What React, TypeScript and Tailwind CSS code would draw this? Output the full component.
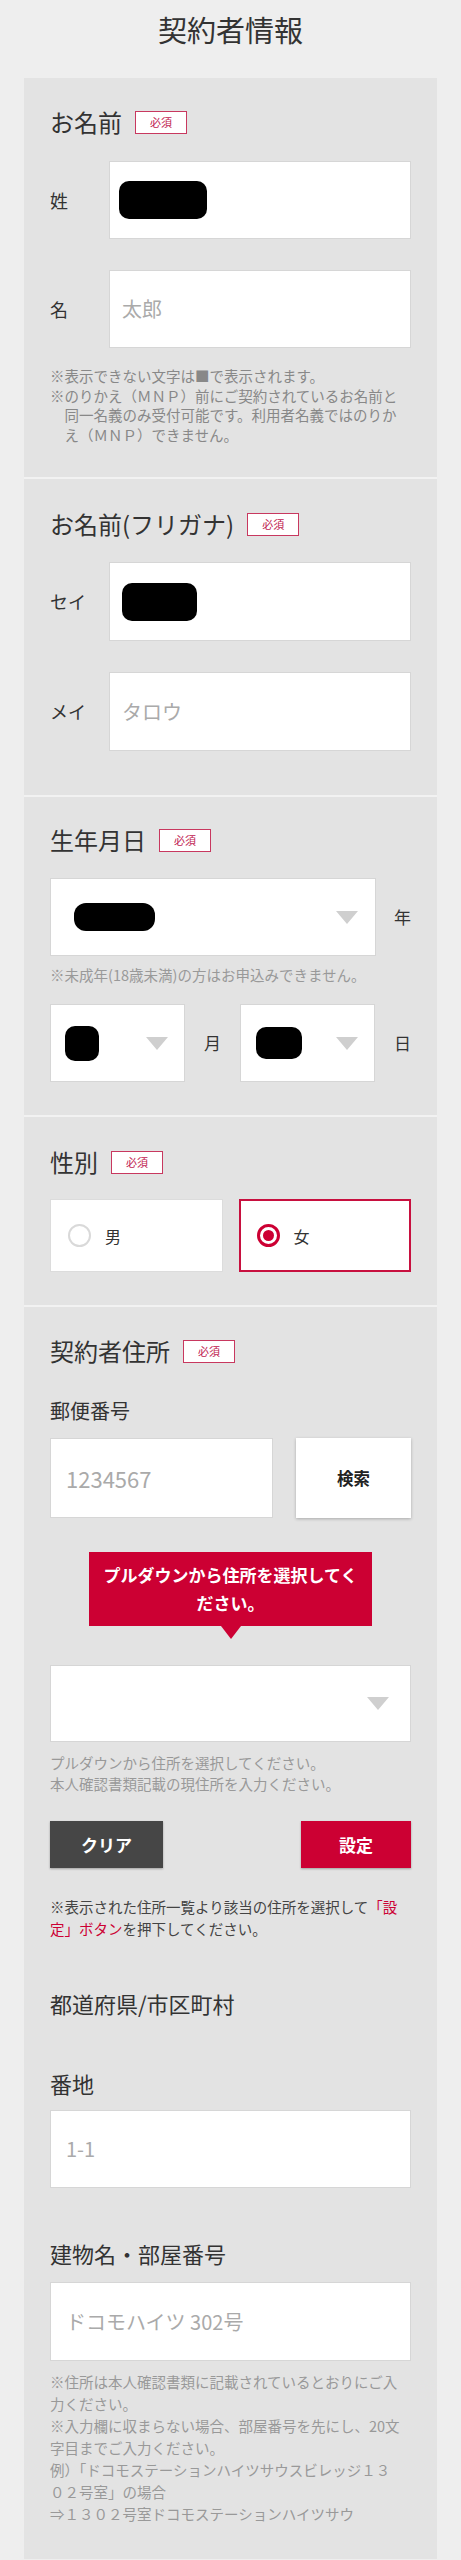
const font = "font-['Noto_Sans_CJK_JP','Noto_Sans',sans-serif]";

function Badge() {
  return (
    <span className="flex h-[23px] w-[52px] items-center justify-center border-[1.5px] border-[#c8385f] bg-white text-[11px] leading-none text-[#c0204f]">
      必須
    </span>
  );
}

function Heading({ label, required = true }: { label: string; required?: boolean }) {
  return (
    <div className="flex h-[30px] items-center gap-[13px]">
      <span className="text-[24px] leading-[30px] text-[#333]">{label}</span>
      {required && <Badge />}
    </div>
  );
}

function Blob({ w, h, r = "rounded-[10px]" }: { w: string; h: string; r?: string }) {
  return <span className={`block bg-black ${w} ${h} ${r}`} />;
}

function Arrow() {
  return (
    <svg width="22" height="13" viewBox="0 0 22 13" className="shrink-0">
      <polygon points="0,0 22,0 11,13" fill="#cfcfcf" />
    </svg>
  );
}

function TextBox({ className = "", children }: { className?: string; children?: React.ReactNode }) {
  return (
    <div className={`flex items-center border border-[#d6d6d6] bg-white ${className}`}>{children}</div>
  );
}

function Placeholder({ text, size = "text-[20px]" }: { text: string; size?: string }) {
  return <span className={`${size} leading-none text-[#aaa]`}>{text}</span>;
}

function NameRow({ label, children, className = "" }: { label: string; children?: React.ReactNode; className?: string }) {
  return (
    <div className={`flex ${className}`}>
      <span className="flex w-[59px] items-center text-[18px] text-[#333]">{label}</span>
      <TextBox className="h-full flex-1 pl-[12px]">{children}</TextBox>
    </div>
  );
}

function Section({ first = false, className = "", children }: { first?: boolean; className?: string; children: React.ReactNode }) {
  return (
    <section className={`px-[26px] ${first ? "" : "border-t-2 border-[#f2f2f2]"} ${className}`}>{children}</section>
  );
}

export default function App() {
  return (
    <div className={`min-h-[2560px] bg-[#eeeeee] ${font} text-[#333]`}>
      <h1 className="flex h-[78px] justify-center pt-[9px] text-[29px] font-normal leading-[40px] text-[#333]">
        契約者情報
      </h1>

      <div className="mx-[24px] bg-[#e3e3e3]">
        {/* お名前 */}
        <Section first className="pt-[29px] pb-[33px]">
          <Heading label="お名前" />
          <NameRow label="姓" className="mt-[24px] h-[78px]">
            <span className="ml-[-3px]">
              <Blob w="w-[88px]" h="h-[38px]" />
            </span>
          </NameRow>
          <NameRow label="名" className="mt-[31px] h-[78px]">
            <Placeholder text="太郎" />
          </NameRow>
          <div className="mt-[18px] text-[14.5px] leading-[19.5px] text-[#888] whitespace-nowrap">
            <div>※表示できない文字は■で表示されます。</div>
            <div>※のりかえ（ＭＮＰ）前にご契約されているお名前と</div>
            <div className="pl-[14.5px]">同一名義のみ受付可能です。利用者名義ではのりか</div>
            <div className="pl-[14.5px]">え（ＭＮＰ）できません。</div>
          </div>
        </Section>

        {/* フリガナ */}
        <Section className="pt-[30px] pb-[44px]">
          <Heading label="お名前(フリガナ)" />
          <NameRow label="セイ" className="mt-[23px] h-[79px]">
            <Blob w="w-[75px]" h="h-[38px]" />
          </NameRow>
          <NameRow label="メイ" className="mt-[31px] h-[79px]">
            <Placeholder text="タロウ" />
          </NameRow>
        </Section>

        {/* 生年月日 */}
        <Section className="pt-[28px] pb-[33px]">
          <Heading label="生年月日" />
          <div className="mt-[23px] flex h-[78px] items-center">
            <TextBox className="h-full w-[326px] justify-between pl-[23px] pr-[17px]">
              <Blob w="w-[81px]" h="h-[28px]" r="rounded-[12px]" />
              <Arrow />
            </TextBox>
            <span className="flex-1 text-right text-[17px]">年</span>
          </div>
          <p className="mt-[9px] text-[14.5px] leading-[20px] text-[#999] whitespace-nowrap">
            ※未成年(18歳未満)の方はお申込みできません。
          </p>
          <div className="mt-[19px] flex h-[78px] items-center">
            <TextBox className="h-full w-[135px] justify-between pl-[14px] pr-[16px]">
              <Blob w="w-[34px]" h="h-[35px]" />
              <Arrow />
            </TextBox>
            <span className="w-[55px] text-center text-[17px]">月</span>
            <TextBox className="h-full w-[135px] justify-between pl-[15px] pr-[16px]">
              <Blob w="w-[46px]" h="h-[32px]" />
              <Arrow />
            </TextBox>
            <span className="flex-1 text-right text-[17px]">日</span>
          </div>
        </Section>

        {/* 性別 */}
        <Section className="pt-[30px] pb-[33px]">
          <Heading label="性別" />
          <div className="mt-[22px] grid h-[73px] grid-cols-2 gap-[16px]">
            <div className="flex items-center border border-[#dcdcdc] bg-white pl-[17px]">
              <span className="h-[23px] w-[23px] rounded-full border-2 border-[#d9d9d9] bg-white" />
              <span className="ml-[14px] text-[16px]">男</span>
            </div>
            <div className="flex items-center border-2 border-[#c8103f] bg-white pl-[16px]">
              <span className="flex h-[23px] w-[23px] items-center justify-center rounded-full border-[3px] border-[#cc0033]">
                <span className="h-[11px] w-[11px] rounded-full bg-[#cc0033]" />
              </span>
              <span className="ml-[14px] text-[16px]">女</span>
            </div>
          </div>
        </Section>

        {/* 契約者住所 */}
        <Section className="pt-[29px] pb-[34px]">
          <Heading label="契約者住所" />
          <div className="mt-[30px] text-[20px] leading-[30px]">郵便番号</div>
          <div className="mt-[12px] flex h-[80px] justify-between">
            <TextBox className="h-full w-[223px] pl-[15px]">
              <Placeholder text="1234567" size="text-[22px]" />
            </TextBox>
            <button className="h-full w-[115px] bg-white text-[16.5px] font-bold text-[#222] shadow-[0_1px_3px_rgba(0,0,0,0.25)]">
              検索
            </button>
          </div>

          <div className="relative mx-auto mt-[34px] flex h-[74px] w-[283px] flex-col items-center justify-center bg-[#cc0033] text-[17px] font-bold leading-[28px] text-white">
            <span>プルダウンから住所を選択してく</span>
            <span>ださい。</span>
            <span className="absolute left-1/2 top-full -translate-x-1/2 border-x-[10px] border-t-[13px] border-x-transparent border-t-[#cc0033]" />
          </div>

          <TextBox className="mt-[39px] h-[77px] justify-end pr-[21px]">
            <Arrow />
          </TextBox>
          <div className="mt-[10px] text-[14.5px] leading-[21px] text-[#999] whitespace-nowrap">
            <div>プルダウンから住所を選択してください。</div>
            <div>本人確認書類記載の現住所を入力ください。</div>
          </div>

          <div className="mt-[27px] flex h-[47px] justify-between">
            <button className="h-full w-[113px] bg-[#464646] text-[17px] font-bold text-white shadow-[0_1px_2px_rgba(0,0,0,0.3)]">
              クリア
            </button>
            <button className="h-full w-[110px] bg-[#cc0033] text-[17px] font-bold text-white shadow-[0_1px_2px_rgba(0,0,0,0.3)]">
              設定
            </button>
          </div>
          <div className="mt-[28px] text-[14.5px] leading-[22px] text-[#444] whitespace-nowrap">
            <div>
              ※表示された住所一覧より該当の住所を選択して<span className="text-[#cc0033]">「設</span>
            </div>
            <div>
              <span className="text-[#cc0033]">定」ボタン</span>を押下してください。
            </div>
          </div>

          <div className="mt-[48px] text-[22px] leading-[30px]">都道府県/市区町村</div>

          <div className="mt-[50px] text-[22px] leading-[30px]">番地</div>
          <TextBox className="mt-[12px] h-[78px] pl-[15px]">
            <Placeholder text="1-1" />
          </TextBox>

          <div className="mt-[50px] text-[22px] leading-[30px]">建物名・部屋番号</div>
          <TextBox className="mt-[14px] h-[79px] pl-[15px]">
            <Placeholder text="ドコモハイツ 302号" />
          </TextBox>
          <div className="mt-[10px] text-[14.5px] leading-[22px] text-[#999] whitespace-nowrap">
            <div>※住所は本人確認書類に記載されているとおりにご入</div>
            <div>力ください。</div>
            <div>※入力欄に収まらない場合、部屋番号を先にし、20文</div>
            <div>字目までご入力ください。</div>
            <div>例）「ドコモステーションハイツサウスビレッジ１３</div>
            <div>０２号室」の場合</div>
            <div>⇒１３０２号室ドコモステーションハイツサウ</div>
          </div>
        </Section>
      </div>
    </div>
  );
}
